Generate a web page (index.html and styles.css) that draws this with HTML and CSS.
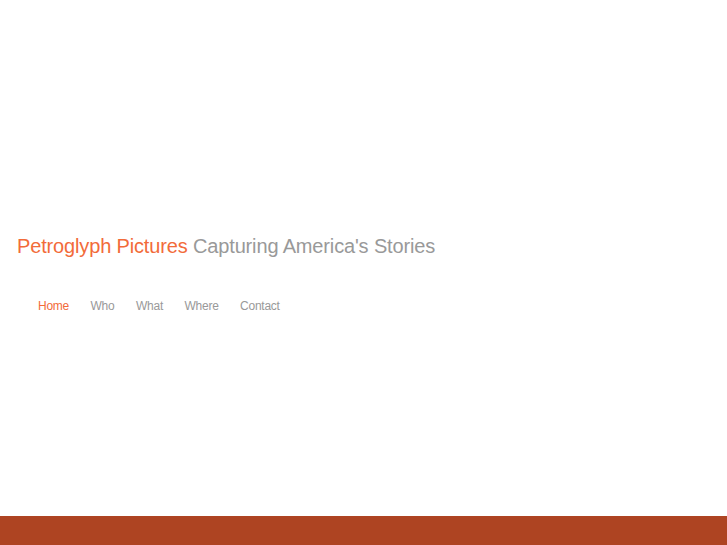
FILE: index.html
```html
<!DOCTYPE html>
<html>
<head>
<meta charset="UTF-8">
<title>Petroglyph Pictures</title>
<link rel="stylesheet" href="styles.css">
</head>
<body>
    <div class="page">
        <div class="header">
            <h1 class="title"><span class="brand">Petroglyph Pictures</span> Capturing America's Stories</h1>
            <ul class="nav">
                <li><a href="#" class="current">Home</a></li>
                <li><a href="#">Who</a></li>
                <li><a href="#">What</a></li>
                <li><a href="#">Where</a></li>
                <li><a href="#">Contact</a></li>
            </ul>
        </div>
    </div>
    <div class="footer"></div>
</body>
</html>
```

FILE: styles.css
```css
html, body {
    height: 100%;
}
body {
    margin: 0;
    background: #fff;
    font-family: "Liberation Sans", Arial, sans-serif;
    display: flex;
    flex-direction: column;
}
.page {
    flex: 1;
    padding-top: 233px;
}
.title {
    margin: 0;
    padding-left: 17px;
    font-size: 20px;
    font-weight: normal;
    line-height: 26px;
    color: #999;
    letter-spacing: -0.15px;
}
.brand {
    color: #f26b3a;
}
.nav {
    list-style: none;
    margin: 0;
    padding: 37px 0 0 38px;
    display: flex;
    gap: 21.5px;
}
.nav a {
    font-size: 12px;
    line-height: 16px;
    letter-spacing: -0.25px;
    color: #999;
    text-decoration: none;
}
.nav a.current {
    color: #f26b3a;
}
.footer {
    height: 29px;
    background: #ae4422;
}
```
